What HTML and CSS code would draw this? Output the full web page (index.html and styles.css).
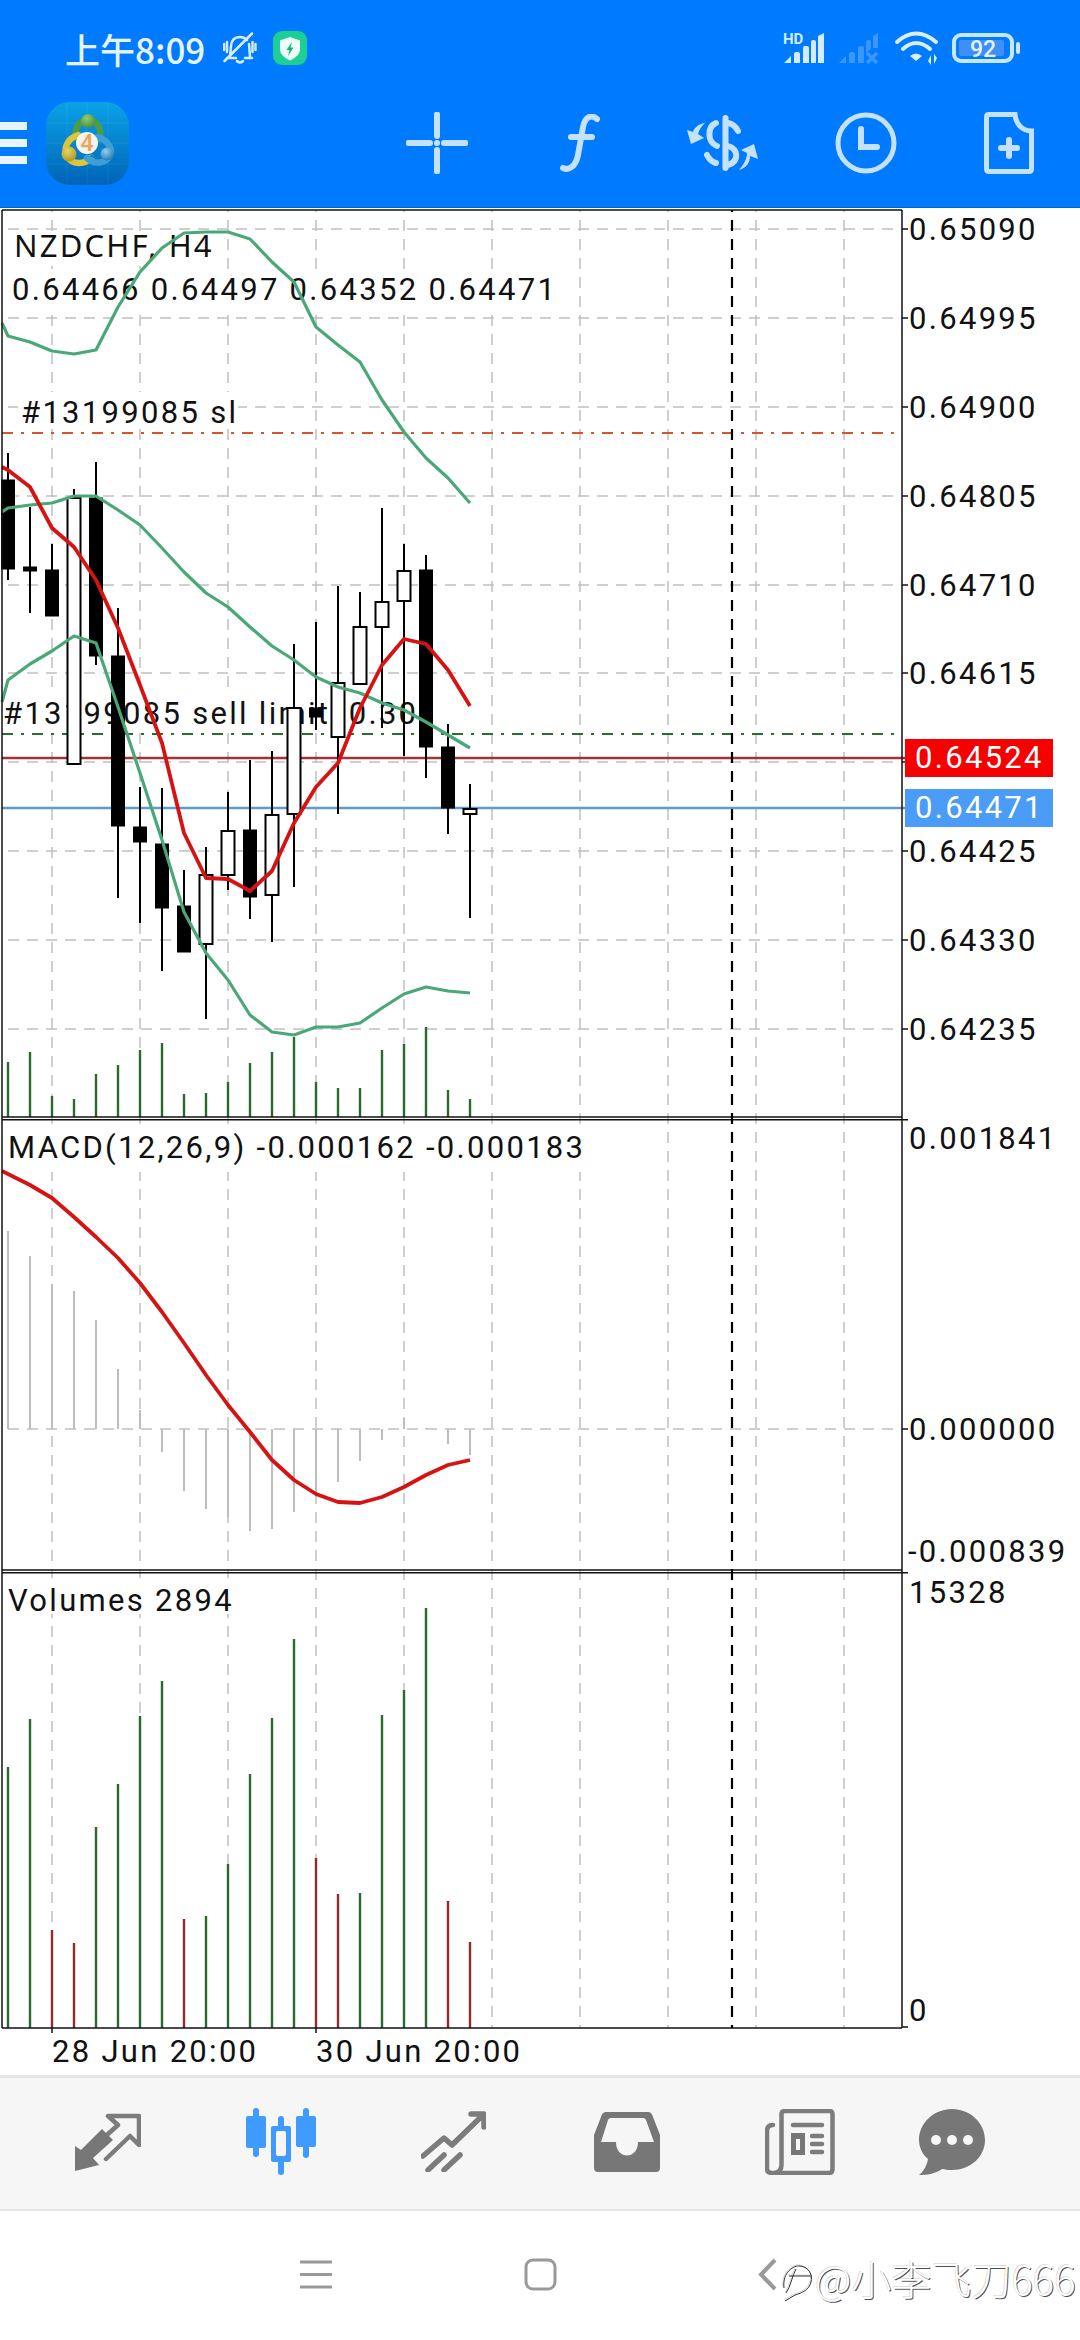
FILE: index.html
```html
<!DOCTYPE html>
<html lang="zh">
<head>
    <meta charset="UTF-8">
    <meta name="viewport" content="width=device-width, initial-scale=1.0">
    <title>NZDCHF, H4</title>
    <link rel="stylesheet" href="styles.css">
</head>
<body>

    <header class="top-bar">
        <div class="status-row">
            <div class="status-left">
                <span class="status-time">上午8:09</span>
                <svg class="icon-bell" width="34" height="33" viewBox="0 0 34 33">
                    <path d="M7 25 L8 14 C8.500 8 12 5 17 5 C20 5 22 6 24 8 M26 12 L27 25 M5 26 H13 M22 26 H29 M14 29 Q17 32 20 29 M1.500 29 L29 1.500"/>
                    <path d="M4 10 V20 M1 12 V18 M29.500 10 V20 M32.500 12 V18"/>
                </svg>
                <svg width="34" height="34" viewBox="0 0 34 34">
                    <rect width="34" height="34" rx="9" fill="#1dcf94"/>
                    <path d="M17 6 L27 9.500 V18 C27 24 22 27 17 29.500 C12 27 7 24 7 18 V9.500Z" fill="#eafff7"/>
                    <path d="M19 11 L13.500 19 H16.500 L15 25 L20.500 16.500 H17.500Z" fill="#1dab7c"/>
                </svg>
            </div>
            <div class="status-right">
                <svg class="signal-hd" width="41" height="36" viewBox="0 -4 41 36">
                    <text class="hd-text" x="0" y="12">HD</text>
                    <path class="signal-bars" d="M1 31 L8 24 V31Z M11 31 V22 Q11 20 13 20 H15 Q17 20 17 22 V31Z M20 31 V16 Q20 14 22 14 H24 Q26 14 26 16 V31Z M28 31 V10 Q28 8 30 8 H31 Q33 8 33 10 V31Z M35 31 V4 L41 1 V31Z"/>
                </svg>
                <svg class="signal-off" width="41" height="32" viewBox="0 0 41 32">
                    <path class="signal-bars" d="M1 31 L8 24 V31Z M11 31 V22 Q11 20 13 20 H15 Q17 20 17 22 V31Z M20 31 V16 Q20 14 22 14 H24 Q26 14 26 16 V31Z M28 21 V10 Q28 8 30 8 H31 Q33 8 33 10 V17 L28 21Z M35 16 V4 L40 1 V16Z"/>
                    <path class="signal-x" d="M29 21 L39 31 M39 21 L29 31"/>
                </svg>
                <svg class="icon-wifi" width="43" height="35" viewBox="0 0 43 35">
                    <path d="M2 11 Q21 -6 41 11 M8 18 Q21 6 35 18"/>
                    <path class="wifi-fill" d="M15 25 Q21 20 27 25 L21 30Z M36 24 V34 L33 30Z M39 33 V23 L42 27Z"/>
                </svg>
                <svg class="battery" width="68" height="30" viewBox="0 0 68 30">
                    <rect class="battery-shell" x="2" y="2" width="58" height="26" rx="7"/>
                    <rect class="battery-level" x="7" y="7" width="45" height="16" rx="2"/>
                    <text class="battery-text" x="31" y="23.500">92</text>
                    <rect class="battery-nub" x="64" y="9" width="4" height="12" rx="2"/>
                </svg>
            </div>
        </div>

        <div class="tool-row">
            <div class="tool-left">
                <div class="burger"><span></span><span></span><span></span></div>
                <svg width="83" height="83" viewBox="0 0 83 83">
                    <defs>
                        <linearGradient id="logoBg" x1="0" y1="0" x2="0" y2="1">
                            <stop offset="0" stop-color="#0aa2e6"/>
                            <stop offset="1" stop-color="#0064b8"/>
                        </linearGradient>
                        <radialGradient id="ballGreen" cx=".4" cy=".3" r=".8">
                            <stop offset="0" stop-color="#8fce72"/>
                            <stop offset="1" stop-color="#3f8a3c"/>
                        </radialGradient>
                        <radialGradient id="ballYellow" cx=".4" cy=".3" r=".8">
                            <stop offset="0" stop-color="#e6d765"/>
                            <stop offset="1" stop-color="#a88f22"/>
                        </radialGradient>
                        <radialGradient id="ballBlue" cx=".4" cy=".3" r=".8">
                            <stop offset="0" stop-color="#8fd2ee"/>
                            <stop offset="1" stop-color="#1f6fa8"/>
                        </radialGradient>
                    </defs>
                    <rect width="83" height="83" rx="24" fill="url(#logoBg)"/>
                    <path d="M21 0 V83 M41 0 V83 M62 0 V83 M0 21 H83 M0 41 H83 M0 62 H83" stroke="#ffffff" stroke-opacity=".07"/>
                    <path class="logo-arc" stroke="#4f9c45" d="M30 36 C28 25 34 18 42 18 C50 18 56 25 54 37"/>
                    <path class="logo-arc" stroke="#d8c63e" d="M32 33 C22 36 17 46 21 54 C26 63 38 63 45 56"/>
                    <path class="logo-arc" stroke="#3c9fd6" d="M52 35 C61 38 67 46 64 53 C60 62 48 63 41 56"/>
                    <path class="logo-arc thin-arc" stroke="#0f7fc4" d="M48 41 C55 44 58 48 56 52 C53 56 49 56 45 54"/>
                    <circle cx="42" cy="19" r="7" fill="url(#ballGreen)"/>
                    <circle cx="23" cy="52" r="7.500" fill="url(#ballYellow)"/>
                    <circle cx="61" cy="52" r="6.500" fill="url(#ballBlue)"/>
                    <circle cx="41" cy="41" r="11" fill="#f7f4ee"/>
                    <text class="logo-four" x="41" y="49">4</text>
                </svg>
            </div>
            <div class="tool-right">
                <div class="tool-btn">
                    <svg class="tool-icon" width="62" height="62" viewBox="0 0 62 62">
                        <path class="thick" d="M31 2.500 V24 M31 38 V59.500 M2.500 31 H24 M38 31 H59.500"/>
                        <circle class="solid" cx="31" cy="31" r="3"/>
                    </svg>
                </div>
                <div class="tool-btn">
                    <svg class="tool-icon" width="40" height="58" viewBox="0 0 40 58">
                        <path class="thick" d="M37 5 C31 0 25 3 23 13 L18 41 C16 52 9 57 3 54 M11 23 H32"/>
                    </svg>
                </div>
                <div class="tool-btn">
                    <svg class="tool-icon" width="72" height="56" viewBox="0 0 72 56">
                        <path class="thick" d="M38.500 3 V53"/>
                        <path class="thick" d="M29 8 C20 12 20 27 30 31 M41 8 C46 9 49 12 51 16 M41 31 C51 34 53 46 41 50 M20 40 C22 44 25 47 29 48"/>
                        <path class="solid" d="M18 8 C11 9 7 13 6 17 L0 15 L4 29 L17 23 L11 19 C12 15 14 12 18 8Z M52 55 C60 53 63 47 63 41 L71 44 L67 29 L54 35 L60 38 C60 44 57 49 52 55Z"/>
                    </svg>
                </div>
                <div class="tool-btn">
                    <svg class="tool-icon" width="62" height="62" viewBox="0 0 62 62">
                        <circle class="thin" cx="31" cy="31" r="28"/>
                        <path class="thick" d="M26 17 V35 H42"/>
                    </svg>
                </div>
                <div class="tool-btn">
                    <svg class="tool-icon" width="50" height="62" viewBox="0 0 50 62">
                        <path class="thin" d="M5 2.500 H31 C32 12 38 19 47.500 19 V57 Q47.500 59.500 45 59.500 H5 Q2.500 59.500 2.500 57 V5 Q2.500 2.500 5 2.500Z"/>
                        <path class="thick" d="M25 28 V44 M17 36 H33"/>
                    </svg>
                </div>
            </div>
        </div>
    </header>

    <svg class="chart" width="1080" height="1867" viewBox="0 208 1080 1867">
        <g id="grid"></g>

        <g class="label-bg">
            <rect x="12" y="232" width="204" height="34"/>
            <rect x="10" y="270" width="548" height="38"/>
            <rect x="18" y="392" width="220" height="36"/>
            <rect x="2" y="695" width="412" height="35"/>
            <rect x="4" y="1126" width="582" height="46"/>
            <rect x="4" y="1578" width="232" height="36"/>
        </g>
        <text class="chart-title" x="14" y="257">NZDCHF, H4</text>
        <text class="chart-text" x="12" y="300">0.64466 0.64497 0.64352 0.64471</text>
        <text class="chart-text" x="21" y="423">#13199085 sl</text>
        <text class="chart-text" x="3" y="724">#13199085 sell limit, 0.30</text>
        <text class="chart-text" x="8" y="1158">MACD(12,26,9) -0.000162 -0.000183</text>
        <text class="chart-text" x="8" y="1611">Volumes 2894</text>

        <g id="levels"></g>
        <g id="bars"></g>
        <g id="candles"></g>
        <g id="indicators"></g>
        <g id="frame"></g>

        <text class="chart-text" x="909" y="240">0.65090</text>
        <text class="chart-text" x="909" y="329">0.64995</text>
        <text class="chart-text" x="909" y="418">0.64900</text>
        <text class="chart-text" x="909" y="507">0.64805</text>
        <text class="chart-text" x="909" y="596">0.64710</text>
        <text class="chart-text" x="909" y="684">0.64615</text>
        <text class="chart-text" x="909" y="862">0.64425</text>
        <text class="chart-text" x="909" y="951">0.64330</text>
        <text class="chart-text" x="909" y="1040">0.64235</text>

        <rect class="badge-red" x="905" y="739" width="148" height="38"/>
        <text class="chart-text badge-text" x="915" y="768">0.64524</text>
        <rect class="badge-blue" x="905" y="789" width="148" height="38"/>
        <text class="chart-text badge-text" x="915" y="818">0.64471</text>

        <text class="chart-text" x="909" y="1149">0.001841</text>
        <text class="chart-text" x="909" y="1440">0.000000</text>
        <text class="chart-text" x="908" y="1562">-0.000839</text>
        <text class="chart-text" x="909" y="1603">15328</text>
        <text class="chart-text" x="909" y="2021">0</text>

        <text class="chart-text" x="52" y="2062">28 Jun 20:00</text>
        <text class="chart-text" x="316" y="2062">30 Jun 20:00</text>
    </svg>

    <nav class="bottom-nav">
        <div class="nav-item">
            <svg class="nav-icon" width="67" height="60" viewBox="0 0 67 60">
                <path d="M1 59 V34 L7 38 L28 17 L39 28 L19 46 L25 53Z"/>
                <path class="nav-line" d="M34 22 L44 13 L34 4 H65 V33 L56 24 L32 47"/>
            </svg>
        </div>
        <div class="nav-item">
            <svg class="nav-active" width="70" height="67" viewBox="0 0 70 67">
                <rect x="7" y="0" width="6" height="49" rx="3"/>
                <rect x="0" y="8" width="20" height="32" rx="2"/>
                <rect x="32" y="8" width="6" height="59" rx="3"/>
                <rect x="25" y="18" width="20" height="36" rx="2"/>
                <rect class="nav-hole" x="30" y="23" width="10" height="25" rx="2"/>
                <rect x="57" y="0" width="6" height="50" rx="3"/>
                <rect x="50" y="8" width="20" height="31" rx="2"/>
            </svg>
        </div>
        <div class="nav-item">
            <svg class="nav-icon" width="65" height="61" viewBox="0 0 65 61">
                <path class="nav-line wide" d="M2 45 L23 27 L31 34 L62 4 M50 3 H63 V16 M7 59 L23 44 M23 59 L39 44"/>
            </svg>
        </div>
        <div class="nav-item">
            <svg class="nav-icon" width="66" height="60" viewBox="0 0 66 60">
                <path fill-rule="evenodd" d="M13 0 H53 C57 0 58 2 59 5 L66 23 V56 Q66 60 62 60 H4 Q0 60 0 56 V23 L7 5 C8 2 9 0 13 0Z M17 6 C15 6 14.500 7 14 8 L7 30 H22 C22 48 44 48 44 30 H60 L52 8 C51.500 7 51 6 49 6Z"/>
            </svg>
        </div>
        <div class="nav-item">
            <svg class="nav-icon" width="70" height="66" viewBox="0 0 70 66">
                <path class="nav-line" d="M8 16 Q2 16 2 22 V60 Q2 64 7 64 H64 Q67.500 64 67.500 60 V5 Q67.500 2 64 2 H20 Q16.500 2 16.500 5 V56 Q16.500 63 9 64"/>
                <path class="nav-line" d="M28 16 H57 M47 27 H57 M47 35 H57 M47 43 H57"/>
                <path fill-rule="evenodd" d="M26 24 H40 V46 H26Z M31 30 V41 H35 V30Z"/>
            </svg>
        </div>
        <div class="nav-item nav-item-last">
            <svg class="nav-icon" width="66" height="66" viewBox="0 0 66 66">
                <path d="M33 0 C51 0 66 14 66 31 C66 48 51 61 33 61 C29 61 26 60.500 23 60 C16 65 8 66 0 66 C5 62 8 56 9 50 C3 45 0 38 0 31 C0 14 15 0 33 0Z"/>
                <circle class="nav-dot" cx="17" cy="31" r="5"/>
                <circle class="nav-dot" cx="33" cy="31" r="5"/>
                <circle class="nav-dot" cx="49" cy="31" r="5"/>
            </svg>
        </div>
    </nav>

    <footer class="system-nav">
        <div class="sys-cell">
            <svg class="sys-icon" width="32" height="29" viewBox="0 0 32 29">
                <path d="M1 2 H31 M1 14.500 H31 M1 27 H31"/>
            </svg>
        </div>
        <div class="sys-cell">
            <svg class="sys-icon" width="33" height="33" viewBox="0 0 33 33">
                <rect x="2" y="2" width="29" height="29" rx="7"/>
            </svg>
        </div>
        <div class="sys-cell sys-back">
            <svg class="sys-icon thick-sys" width="19" height="33" viewBox="0 0 19 33">
                <path d="M17 2 L3 16.500 L17 31"/>
            </svg>
        </div>
        <div class="watermark">
            <svg class="watermark-logo" width="34" height="40" viewBox="0 0 34 40">
                <path class="edge-light" d="M4 24 C2 8 14 1 20 2 C29 3 33 11 31 18 C29 26 22 29 15 31 L5 37 M9 12 H32 M16 5 C12 12 11 22 6 29"/>
                <path class="edge-dark" d="M5 25 C3 9 15 2 21 3 C30 4 34 12 32 19 C30 27 23 30 16 32 L6 38 M10 13 H33 M17 6 C13 13 12 23 7 30"/>
            </svg>
            <span class="watermark-text">@小李飞刀666</span>
        </div>
    </footer>

    <script src="chart.js"></script>
</body>
</html>
```

FILE: styles.css
```css
html, body {
    margin: 0;
    padding: 0;
    width: 1080px;
    height: 2340px;
    overflow: hidden;
    background-color: #ffffff;
    font-family: Roboto, "Noto Sans CJK SC", sans-serif;
}

svg {
    display: block;
}

/* top blue part */
.top-bar {
    height: 207px;
    background-color: #007aff;
    border-bottom: 1px solid #0065cc;
}

.status-row {
    height: 96px;
    display: flex;
    justify-content: space-between;
    align-items: center;
    padding: 0 60px 0 65px;
}

.status-left {
    display: flex;
    align-items: center;
}

.status-time {
    width: 158px;
    font-family: "Noto Sans CJK SC", sans-serif;
    font-size: 35px;
    font-weight: 500;
    color: #e4f3ff;
    white-space: nowrap;
}

.icon-bell {
    margin-right: 16px;
    fill: none;
    stroke: #d6edff;
    stroke-width: 2.5;
    stroke-linecap: round;
}

.status-right {
    display: flex;
    align-items: center;
    gap: 14px;
}

.signal-hd {
    margin-top: -4px;
}

.hd-text {
    font-family: Roboto, sans-serif;
    font-size: 15px;
    font-weight: 700;
    fill: #d3ebff;
}

.signal-bars {
    fill: #d3ebff;
}

.signal-off {
    margin-right: 2px;
}

.signal-off .signal-bars {
    fill: #3a97ff;
}

.signal-x {
    fill: none;
    stroke: #3a97ff;
    stroke-width: 3.5;
}

.icon-wifi {
    fill: none;
    stroke: #d9eeff;
    stroke-width: 4;
    stroke-linecap: round;
}

.wifi-fill {
    fill: #d9eeff;
    stroke: none;
}

.battery-shell {
    fill: none;
    stroke: #c9e6ff;
    stroke-width: 4;
}

.battery-level {
    fill: #3f90f6;
}

.battery-text {
    font-family: Roboto, sans-serif;
    font-size: 23px;
    font-weight: 500;
    text-anchor: middle;
    fill: #e2f2ff;
}

.battery-nub {
    fill: #c9e6ff;
}

.tool-row {
    height: 94px;
    display: flex;
    justify-content: space-between;
    align-items: center;
}

.tool-left {
    display: flex;
    align-items: center;
    gap: 19px;
}

.burger {
    width: 27px;
    display: flex;
    flex-direction: column;
    gap: 9px;
}

.burger span {
    display: block;
    height: 8px;
    background-color: #e6f5ff;
}

.logo-arc {
    fill: none;
    stroke-width: 6.5;
    stroke-linecap: round;
}

.logo-arc.thin-arc {
    stroke-width: 2;
}

.logo-four {
    font-family: Roboto, sans-serif;
    font-size: 23px;
    font-weight: 500;
    text-anchor: middle;
    fill: #f0a25a;
}

.tool-right {
    display: flex;
}

.tool-btn {
    width: 143px;
    display: flex;
    justify-content: center;
    align-items: center;
}

.tool-icon .thick {
    fill: none;
    stroke: #c4e2ff;
    stroke-width: 6;
    stroke-linecap: round;
}

.tool-icon .thin {
    fill: none;
    stroke: #c4e2ff;
    stroke-width: 5;
}

.tool-icon .solid {
    fill: #c4e2ff;
}

/* chart, the coordinates in the svg are page pixels */
.chart {
    width: 1080px;
    height: 1867px;
}

.label-bg {
    fill: #ffffff;
}

.chart-text {
    font-family: Roboto, sans-serif;
    font-size: 31px;
    letter-spacing: 2.3px;
    fill: #111111;
}

.chart-title {
    font-family: "Noto Sans", sans-serif;
    font-size: 31px;
    letter-spacing: 2.2px;
    fill: #111111;
}

.badge-text {
    fill: #ffffff;
}

.badge-red {
    fill: #f60000;
}

.badge-blue {
    fill: #4a9cf6;
}

.grid-line {
    stroke: #c0c0c0;
    stroke-width: 1.5;
    stroke-dasharray: 11 8;
    fill: none;
}

.grid-line.across {
    stroke-dashoffset: 13;
}

.grid-line.down {
    stroke-dashoffset: 9;
}

.frame-line {
    stroke: #111111;
    stroke-width: 1.5;
}

.cross-line {
    stroke: #000000;
    stroke-width: 2.2;
    stroke-dasharray: 11 8;
    stroke-dashoffset: 9;
}

.wick {
    stroke: #000000;
    stroke-width: 2;
}

.body-black {
    fill: #000000;
    stroke: #000000;
    stroke-width: 1;
}

.body-white {
    fill: #ffffff;
    stroke: #000000;
    stroke-width: 2;
}

.vol-green {
    stroke: #2a6a2c;
    stroke-width: 2.4;
}

.vol-red {
    stroke: #8f2d2d;
    stroke-width: 2.4;
}

.macd-bar {
    stroke: #bdbdbd;
    stroke-width: 2;
}

.band-line {
    fill: none;
    stroke: #4aa878;
    stroke-width: 3.2;
}

.ma-line {
    fill: none;
    stroke: #d61313;
    stroke-width: 3.8;
}

.level-sl {
    stroke: #d4572c;
    stroke-width: 2;
    stroke-dasharray: 11 8 3 8;
}

.level-limit {
    stroke: #2a6e30;
    stroke-width: 2;
    stroke-dasharray: 11 8 3 8;
}

.level-ask {
    stroke: #a03438;
    stroke-width: 2.4;
}

.level-bid {
    stroke: #5f9ccb;
    stroke-width: 2.4;
}

/* bottom tabs */
.bottom-nav {
    height: 136px;
    box-sizing: border-box;
    background-color: #f6f6f6;
    border-top: 3px solid #e4e4e4;
    border-bottom: 2px solid #e6e6e6;
    padding-bottom: 4px;
    display: flex;
    justify-content: center;
    align-items: center;
}

.nav-item {
    width: 173px;
    display: flex;
    justify-content: center;
    align-items: center;
}

.nav-item-last {
    margin-left: -21px;
    margin-right: 21px;
}

.nav-icon {
    fill: #777777;
}

.nav-line {
    fill: none;
    stroke: #7c7c7c;
    stroke-width: 4.5;
    stroke-linecap: round;
    stroke-linejoin: round;
}

.nav-line.wide {
    stroke-width: 5.5;
}

.nav-active {
    fill: #3f9bff;
}

.nav-hole {
    fill: #f6f6f6;
}

.nav-dot {
    fill: #f6f6f6;
}

/* android navigation and the watermark over it */
.system-nav {
    position: relative;
    height: 129px;
    display: flex;
    justify-content: center;
    align-items: center;
    padding-bottom: 3px;
    box-sizing: border-box;
}

.sys-cell {
    width: 224px;
    display: flex;
    justify-content: center;
}

.sys-icon {
    fill: none;
    stroke: #999999;
    stroke-width: 3;
    stroke-linecap: round;
}

.sys-icon.thick-sys {
    stroke-width: 4;
    stroke-linecap: butt;
}

.sys-back {
    padding-left: 6px;
    box-sizing: border-box;
}

.watermark {
    position: absolute;
    left: 779px;
    top: 44px;
    display: flex;
    align-items: flex-start;
    gap: 2px;
}

.watermark-logo {
    margin-top: 8px;
    fill: none;
    stroke-width: 1;
}

.edge-light {
    stroke: #d8d8d8;
}

.edge-dark {
    stroke: #333333;
}

.watermark-text {
    font-family: "Noto Sans CJK SC", sans-serif;
    font-size: 40px;
    font-weight: 300;
    line-height: 46px;
    color: #ffffff;
    white-space: nowrap;
    text-shadow: 1px 1px 0 rgba(0,0,0,0.7), -1px -1px 0 rgba(0,0,0,0.15);
}
```

FILE: chart.js
```js
// x of the first bar and the distance between bars
var FIRST_X = 8;
var STEP = 22;

// top of body, bottom of body, wick top, wick bottom, white?
var candles = [
    [480, 569, 453, 580, 0], [567, 571, 507, 613, 0], [570, 616, 544, 616, 0], [498, 764, 489, 764, 1],
    [498, 656, 462, 665, 0], [656, 826, 608, 898, 0], [827, 842, 787, 923, 0], [844, 908, 788, 971, 0],
    [906, 952, 870, 952, 0], [875, 944, 847, 1019, 1], [831, 875, 792, 890, 1], [830, 897, 760, 919, 0],
    [815, 895, 751, 942, 1], [708, 814, 644, 887, 1], [708, 717, 622, 730, 0], [683, 737, 586, 814, 1],
    [627, 684, 592, 684, 1], [602, 627, 508, 728, 1], [571, 601, 544, 756, 1], [570, 747, 555, 778, 0],
    [747, 808, 724, 834, 0], [809, 814, 784, 918, 1]
];

var upperBand = [323, 336, 342, 351, 354, 350, 307, 272, 248, 233, 232, 232, 239, 262, 282, 327, 345, 362, 400, 432, 458, 478, 503];
var middleBand = [512, 508, 505, 503, 496, 496, 510, 525, 548, 572, 593, 607, 627, 646, 660, 677, 687, 693, 703, 710, 722, 735, 748];
var lowerBand = [702, 680, 664, 651, 636, 643, 707, 773, 840, 912, 953, 980, 1015, 1032, 1035, 1027, 1027, 1023, 1008, 994, 987, 991, 993];
var maLine = [467, 470, 487, 528, 547, 580, 628, 685, 743, 833, 878, 879, 891, 871, 823, 787, 763, 708, 665, 639, 644, 670, 706];
var macdLine = [1171, 1174, 1185, 1198, 1217, 1237, 1258, 1283, 1312, 1343, 1375, 1405, 1432, 1460, 1480, 1494, 1502, 1503, 1497, 1487, 1475, 1465, 1460];

var smallVolumes = [1062, 1052, 1096, 1099, 1074, 1065, 1050, 1043, 1094, 1093, 1082, 1063, 1052, 1037, 1082, 1088, 1088, 1050, 1044, 1027, 1090, 1099];
var macdBars = [1231, 1256, 1284, 1291, 1320, 1369, 1410, 1452, 1491, 1509, 1517, 1531, 1529, 1512, 1497, 1482, 1461, 1440, 1419, 1428, 1444, 1455];
// top of bar, 1 = red
var volumes = [
    [1767, 0], [1719, 0], [1930, 1], [1943, 1], [1827, 0], [1784, 0], [1716, 0], [1681, 0], [1919, 1], [1916, 0], [1864, 0],
    [1774, 0], [1718, 0], [1639, 0], [1858, 1], [1894, 1], [1893, 0], [1715, 0], [1690, 0], [1608, 0], [1901, 1], [1942, 1]
];

var hGrid = [229, 318, 407, 496, 585, 673, 762, 851, 940, 1029, 1429];
var vGrid = [52, 140, 228, 316, 404, 492, 580, 668, 756, 844];

function add(group, tag, attrs) {
    var el = document.createElementNS('http://www.w3.org/2000/svg', tag);
    for (var key in attrs) {
        el.setAttribute(key, attrs[key]);
    }
    group.appendChild(el);
    return el;
}

function line(group, cls, x1, y1, x2, y2) {
    add(group, 'line', { 'class': cls, x1: x1, y1: y1, x2: x2, y2: y2 });
}

function barX(i) {
    return FIRST_X + i * STEP;
}

function drawGrid() {
    var g = document.getElementById('grid');
    hGrid.forEach(function(y) {
        line(g, 'grid-line across', 2, y, 902, y);
    });
    vGrid.forEach(function(x) {
        line(g, 'grid-line down', x, 210, x, 2028);
    });
}

function drawLevels() {
    var g = document.getElementById('levels');
    line(g, 'level-sl', 2, 433, 902, 433);
    line(g, 'level-limit', 2, 734, 902, 734);
    line(g, 'level-ask', 2, 758, 905, 758);
    line(g, 'level-bid', 2, 808, 905, 808);
}

function drawBars() {
    var g = document.getElementById('bars');
    smallVolumes.forEach(function(top, i) {
        line(g, 'vol-green', barX(i), top, barX(i), 1117);
    });
    macdBars.forEach(function(top, i) {
        line(g, 'macd-bar', barX(i), top, barX(i), 1429);
    });
    volumes.forEach(function(v, i) {
        line(g, v[1] ? 'vol-red' : 'vol-green', barX(i), v[0], barX(i), 2028);
    });
}

function drawCandles() {
    var g = document.getElementById('candles');
    candles.forEach(function(c, i) {
        var x = barX(i);
        line(g, 'wick', x, c[2], x, c[3]);
        add(g, 'rect', {
            'class': c[4] ? 'body-white' : 'body-black',
            x: x - 6.5,
            y: c[0],
            width: 13,
            height: c[1] - c[0]
        });
    });
}

function drawCurve(group, cls, values) {
    // the first value is at the left edge of the chart, before the first bar
    var pts = '2,' + values[0];
    for (var i = 1; i < values.length; i++) {
        pts += ' ' + barX(i - 1) + ',' + values[i];
    }
    add(group, 'polyline', { 'class': cls, points: pts, 'stroke-linejoin': 'round' });
}

function drawIndicators() {
    var g = document.getElementById('indicators');
    drawCurve(g, 'band-line', upperBand);
    drawCurve(g, 'band-line', middleBand);
    drawCurve(g, 'band-line', lowerBand);
    drawCurve(g, 'ma-line', maLine);
    drawCurve(g, 'ma-line', macdLine);
}

function drawFrame() {
    var g = document.getElementById('frame');
    line(g, 'frame-line', 2, 210, 902, 210);
    line(g, 'frame-line', 2, 210, 2, 2028);
    line(g, 'frame-line', 902, 210, 902, 2028);
    line(g, 'frame-line', 2, 1117, 902, 1117);
    line(g, 'frame-line', 2, 1119.7, 908, 1119.7);
    line(g, 'frame-line', 2, 1570, 902, 1570);
    line(g, 'frame-line', 2, 1572.7, 908, 1572.7);
    line(g, 'frame-line', 2, 2028, 902, 2028);
    line(g, 'frame-line', 902, 2027, 908, 2027);
    line(g, 'frame-line', 52, 2028, 52, 2033);
    line(g, 'frame-line', 316, 2028, 316, 2033);
    hGrid.forEach(function(y) {
        line(g, 'frame-line', 902, y, 908, y);
    });
    line(g, 'cross-line', 732, 210, 732, 2028);
}

drawGrid();
drawLevels();
drawBars();
drawCandles();
drawIndicators();
drawFrame();
```
